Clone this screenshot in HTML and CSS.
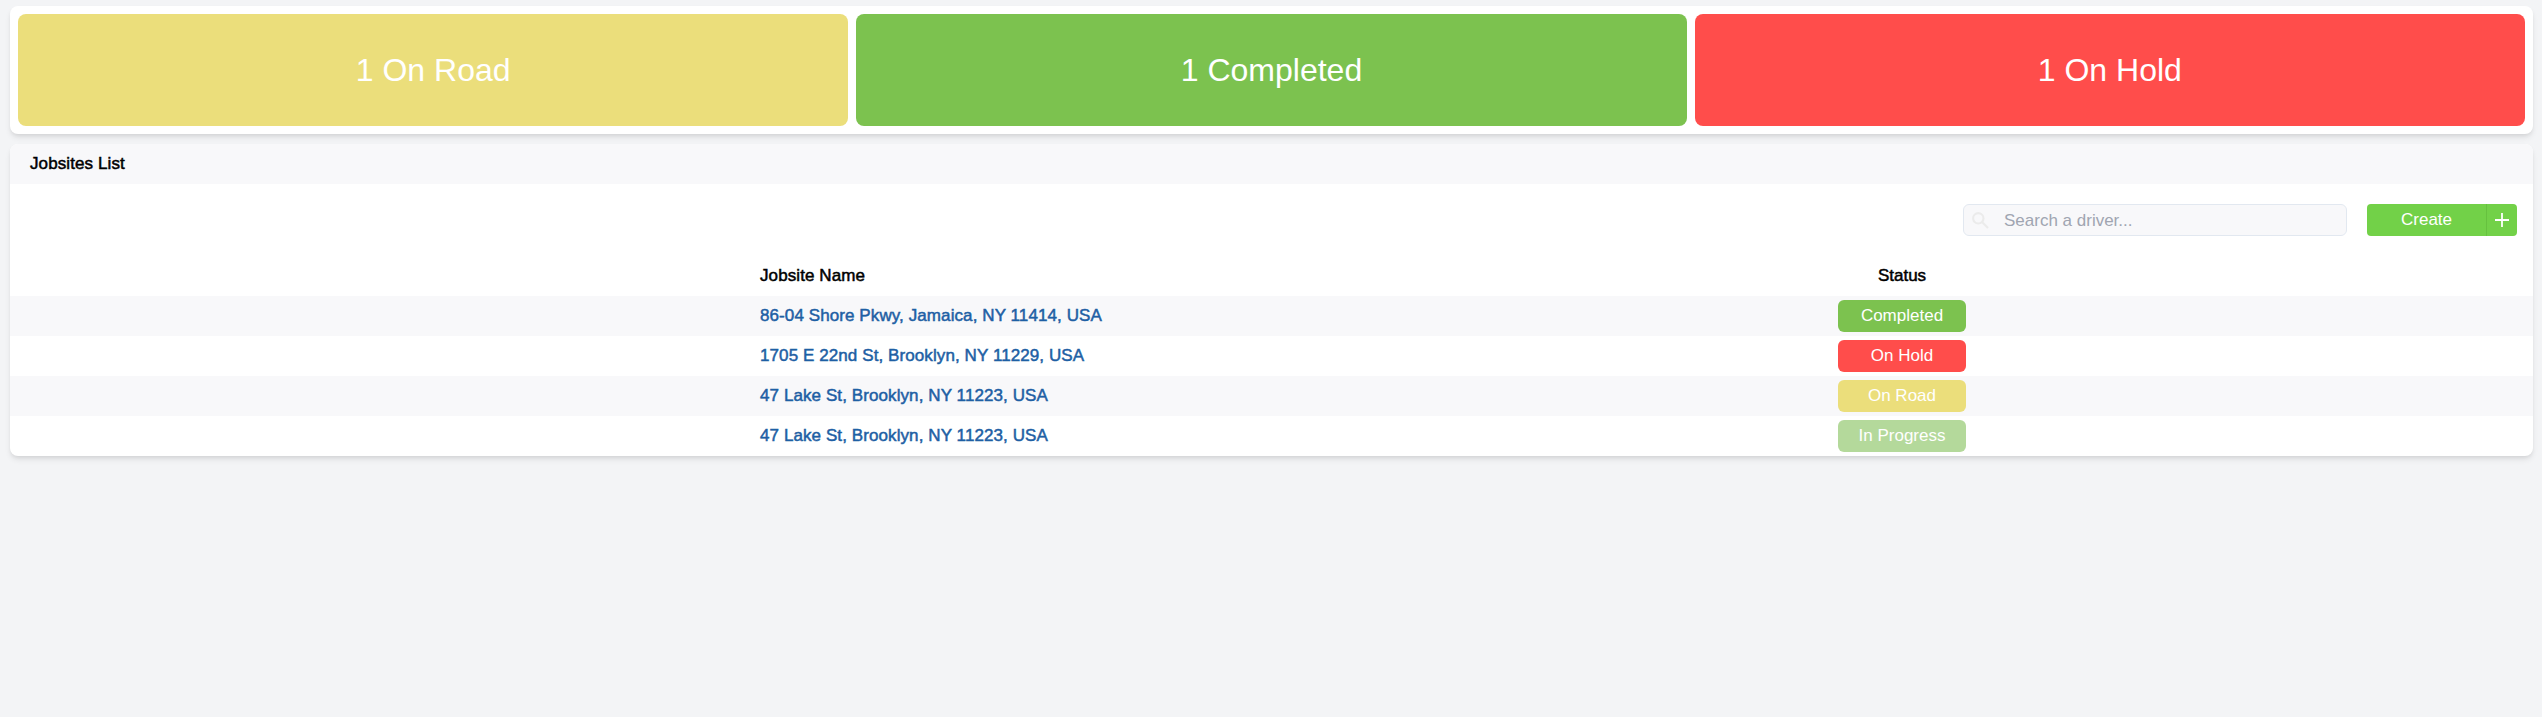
FILE: index.html
```html
<!DOCTYPE html>
<html lang="en">
<head>
<meta charset="utf-8">
<title>Jobsites</title>
<link rel="stylesheet" href="styles.css">
</head>
<body>
<main class="page">
  <section class="panel summary">
    <div class="tile road">1 On Road</div>
    <div class="tile completed">1 Completed</div>
    <div class="tile hold">1 On Hold</div>
  </section>
  <section class="panel list">
    <h1 class="list-title">Jobsites List</h1>
    <div class="toolbar">
      <label class="search">
        <svg class="search-icon" viewBox="0 0 17 17"><circle cx="6.3" cy="6.3" r="5.2"/><path d="M10 10l6 6"/></svg>
        <input class="search-input" type="text" placeholder="Search a driver...">
      </label>
      <button class="create" type="button">
        <span class="create-label">Create</span>
        <span class="create-plus"><svg class="plus-icon" viewBox="0 0 14 14"><path d="M7 0v14M0 7h14"/></svg></span>
      </button>
    </div>
    <div class="row head"><span class="name">Jobsite Name</span><span class="status">Status</span></div>
    <div class="row shaded"><a class="name link">86-04 Shore Pkwy, Jamaica, NY 11414, USA</a><span class="status"><span class="badge completed">Completed</span></span></div>
    <div class="row"><a class="name link">1705 E 22nd St, Brooklyn, NY 11229, USA</a><span class="status"><span class="badge hold">On Hold</span></span></div>
    <div class="row shaded"><a class="name link">47 Lake St, Brooklyn, NY 11223, USA</a><span class="status"><span class="badge road">On Road</span></span></div>
    <div class="row"><a class="name link">47 Lake St, Brooklyn, NY 11223, USA</a><span class="status"><span class="badge progress">In Progress</span></span></div>
  </section>
</main>
</body>
</html>
```
FILE: styles.css
```css
* { box-sizing: border-box; }
body {
  margin: 0;
  min-height: 100vh;
  background: #f3f4f6;
  color: #000;
  font: 17px/24px "Liberation Sans", Arial, sans-serif;
}
.page {
  display: flex;
  flex-direction: column;
  gap: 10px;
  padding: 6px 9px 0 10px;
}
.panel {
  background: #fff;
  border-radius: 8px;
  box-shadow: 0 4px 6px -1px rgba(0, 0, 0, .1), 0 2px 4px -1px rgba(0, 0, 0, .06);
}
.summary {
  display: grid;
  grid-template-columns: repeat(3, 1fr);
  gap: 8px;
  height: 128px;
  padding: 8px;
}
.tile {
  display: flex;
  align-items: center;
  justify-content: center;
  border-radius: 8px;
  color: #fff;
  font-size: 32px;
}
.road { background: #ebde7b; }
.completed { background: #7cc24f; }
.hold { background: #ff4d4b; }
.progress { background: #b4d99b; }
.list { overflow: hidden; }
.list-title {
  height: 40px;
  margin: 0;
  padding: 0 20px;
  background: #f8f8fa;
  font-size: 17px;
  font-weight: 400;
  letter-spacing: .1px;
  line-height: 39px;
  -webkit-text-stroke: .5px;
}
.toolbar {
  display: flex;
  justify-content: flex-end;
  gap: 20px;
  height: 72px;
  padding: 20px 16px;
}
.search {
  display: flex;
  align-items: center;
  width: 384px;
  height: 32px;
  padding-left: 8px;
  border: 1px solid #e2e8f0;
  border-radius: 6px;
  background: #f8f8fa;
}
.search-icon {
  width: 17px;
  height: 17px;
  fill: none;
  stroke: #ebebeb;
  stroke-width: 2.1;
}
.search-input {
  flex: 1;
  margin-left: 15px;
  padding: 1px 0 0;
  border: 0;
  outline: 0;
  background: transparent;
  font: inherit;
}
.search-input::placeholder { color: #a0a5b1; }
.create {
  display: flex;
  width: 150px;
  height: 32px;
  padding: 0;
  border: 0;
  border-radius: 4px;
  overflow: hidden;
  background: #72d148;
  color: #fff;
  font: inherit;
  line-height: 31px;
}
.create-label { flex: 1; }
.create-plus {
  display: flex;
  align-items: center;
  justify-content: center;
  width: 31px;
  height: 32px;
  border-left: 1px solid #66c13f;
}
.plus-icon {
  width: 14px;
  height: 14px;
  stroke: #fff;
  stroke-width: 1.8;
}
.row {
  display: grid;
  grid-template-columns: 1512px 760px;
  height: 40px;
  line-height: 40px;
}
.shaded { background: #f8f8fa; }
.name {
  padding-left: 750px;
  letter-spacing: .09px;
  -webkit-text-stroke: .5px;
}
.link { color: #1e5fa4; }
.status {
  display: flex;
  align-items: center;
  justify-content: center;
}
.head .status { -webkit-text-stroke: .5px; }
.badge {
  width: 128px;
  height: 32px;
  border-radius: 6px;
  color: #fff;
  line-height: 31px;
  text-align: center;
}
```
